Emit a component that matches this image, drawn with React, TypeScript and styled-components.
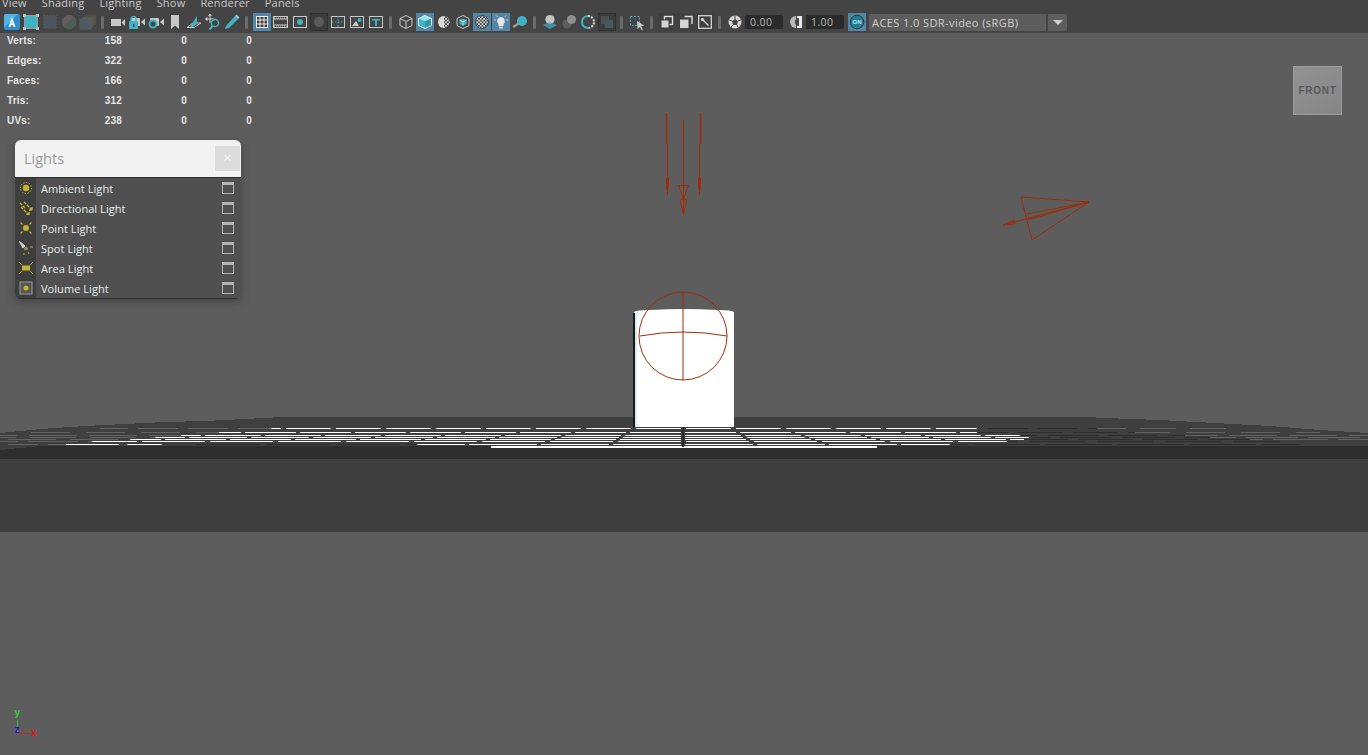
import React from 'react';
import styled, { createGlobalStyle } from 'styled-components';

const GlobalStyle = createGlobalStyle`
  html, body {
    margin: 0;
    height: 100%;
    background: #5d5d5d;
    overflow: hidden;
  }
  #root {
    height: 100%;
  }
`;

const Page = styled.div`
  display: flex;
  flex-direction: column;
  height: 755px;
  font-family: 'Open Sans', sans-serif;
`;

const MenuBar = styled.div`
  display: flex;
  gap: 15px;
  height: 11px;
  flex: none;
  padding-left: 2px;
  background: #444444;
  overflow: hidden;
`;

const MenuItem = styled.span`
  font-size: 11px;
  line-height: 11px;
  letter-spacing: 0.2px;
  color: #c9c9c9;
  margin-top: -3px;
`;

const Toolbar = styled.div`
  display: flex;
  align-items: center;
  height: 22px;
  flex: none;
  padding-left: 2px;
  background: #444444;
`;

type Tone = 'active' | 'dark' | 'shade';

const toneColors: Record<Tone, string> = {
  active: '#5285a6',
  dark: '#3c3c3c',
  shade: '#404040',
};

const Slot = styled.div<{ $tone?: Tone; $left?: number }>`
  width: 18px;
  height: 18px;
  margin: 0 0.5px 0 ${(p) => 0.5 + (p.$left ?? 0)}px;
  flex: none;
  background: ${(p) => (p.$tone ? toneColors[p.$tone] : 'transparent')};
  box-shadow: ${(p) => (p.$tone === 'dark' ? 'inset 0 0 0 1px #303030' : 'none')};
`;

const Divider = styled.div`
  width: 11px;
  flex: none;
  display: flex;
  justify-content: center;

  &::before {
    content: '';
    width: 3px;
    height: 13px;
    border-radius: 1px;
    background: #6a6a6a;
  }
`;

const NumberField = styled.div<{ $gap?: number }>`
  width: 38px;
  height: 14px;
  flex: none;
  margin-left: ${(p) => p.$gap ?? 0}px;
  border-radius: 2px;
  background: #2b2b2b;
  color: #b4b4b4;
  font-size: 10.5px;
  line-height: 14px;
  letter-spacing: 0.4px;
  padding-left: 5px;
  box-sizing: border-box;
`;

const ColorSpace = styled.div`
  width: 177px;
  height: 17px;
  flex: none;
  margin-left: 3px;
  border-radius: 2px 0 0 2px;
  background: #5d5d5d;
  color: #cfcfcf;
  font-size: 11px;
  line-height: 17px;
  letter-spacing: 0.42px;
  padding-left: 3px;
  box-sizing: border-box;
`;

const ColorSpaceArrow = styled.div`
  width: 19px;
  height: 17px;
  flex: none;
  margin-left: 2px;
  border-radius: 0 2px 2px 0;
  background: #5d5d5d;
  display: flex;
  align-items: center;
  justify-content: center;

  &::before {
    content: '';
    border-left: 5px solid transparent;
    border-right: 5px solid transparent;
    border-top: 5px solid #cfcfcf;
  }
`;

const Viewport = styled.div`
  position: relative;
  flex: 1;
  background: #5d5d5d;
`;

const Scene = styled.svg`
  position: absolute;
  inset: 0;
  width: 100%;
  height: 100%;
`;

const Stats = styled.div`
  position: absolute;
  left: 7px;
  top: -3px;
  display: grid;
  grid-template-columns: 95px 20px 65px 65px;
  grid-auto-rows: 20px;
  align-items: center;
  font-family: 'Liberation Sans', sans-serif;
  font-size: 10px;
  font-weight: 700;
  letter-spacing: 0.2px;
  color: #e6e6e6;
`;

const StatValue = styled.span`
  text-align: right;
`;

const Panel = styled.div`
  position: absolute;
  left: 15px;
  top: 107px;
  width: 226px;
  border-radius: 6px;
  overflow: hidden;
  box-shadow: 0 3px 10px rgba(0, 0, 0, 0.28);
`;

const PanelHeader = styled.div`
  height: 37px;
  display: flex;
  align-items: center;
  justify-content: space-between;
  padding-left: 9px;
  padding-right: 1px;
  background: #f2f2f2;
`;

const PanelTitle = styled.span`
  font-size: 14.5px;
  color: #9a9a9a;
`;

const CloseButton = styled.div`
  width: 25px;
  height: 25px;
  background: #dcdcdc;
  color: #f5f5f5;
  font-size: 14px;
  line-height: 24px;
  text-align: center;
`;

const PanelBody = styled.div`
  display: flex;
  flex-direction: column;
  background: #505050;
  border-top: 1px solid #2e2e2e;
  border-bottom: 1px solid #2e2e2e;
`;

const LightRow = styled.div`
  display: flex;
  align-items: center;
  height: 20px;
`;

const LightIcon = styled.div`
  width: 21px;
  height: 100%;
  flex: none;
  background: #3e3e3e;
  display: flex;
  align-items: center;
  justify-content: center;
`;

const LightName = styled.span`
  flex: 1;
  margin-left: 5px;
  font-size: 11px;
  letter-spacing: 0.05px;
  color: #e6eeee;
`;

const WindowBox = styled.div`
  width: 12px;
  height: 12px;
  margin-right: 7px;
  box-sizing: border-box;
  border: 1px solid #b4b4b4;
  border-top-width: 3px;
`;

const Cube = styled.div`
  position: absolute;
  left: 1293px;
  top: 33px;
  width: 49px;
  height: 49px;
  box-sizing: border-box;
  border: 1px solid #9c9c9c;
  background: linear-gradient(135deg, #929292, #868686);
  display: flex;
  align-items: center;
  justify-content: center;
  font-family: 'Liberation Sans', sans-serif;
  font-size: 10px;
  font-weight: 700;
  letter-spacing: 0.7px;
  color: #5a5a5a;
`;

const TEAL = '#3fb3c4';
const GREY = '#c8c8c8';

type IconProps = { children: React.ReactNode };

const Ico = ({ children }: IconProps) => (
  <svg width="18" height="18" viewBox="0 0 18 18" fill="none" style={{ display: 'block' }}>
    {children}
  </svg>
);

const cameraBody = (x = 1) => (
  <>
    <rect x={x} y={5} width={9} height={8} rx={1} fill={GREY} />
    <path d={`M${x + 10} 9 L${x + 14} 5.5 V12.5 Z`} fill={GREY} />
  </>
);

const toolIcons: Record<string, React.ReactNode> = {
  logo: (
    <>
      <rect x="1" y="1" width="16" height="16" rx="2" fill="#2b8fcb" />
      <path d="M1 15 L15 1 H3 a2 2 0 0 0 -2 2 Z" fill="#53b3e4" />
      <path d="M9 4 L5.5 14 H7.4 L8 12 H10 L10.6 14 H12.5 L9 4 Z M8.4 10.4 L9 8 L9.6 10.4 Z" fill="#ffffff" fillRule="evenodd" />
    </>
  ),
  frame: (
    <>
      <rect x="3" y="3" width="12" height="12" fill={TEAL} />
      <rect x="2.5" y="2.5" width="13" height="13" stroke="#9a9a9a" />
      <rect x="1" y="1" width="3" height="3" fill="#bdbdbd" />
      <rect x="14" y="1" width="3" height="3" fill="#bdbdbd" />
      <rect x="1" y="14" width="3" height="3" fill="#bdbdbd" />
      <rect x="14" y="14" width="3" height="3" fill="#bdbdbd" />
    </>
  ),
  dimGrid: (
    <>
      <rect x="3" y="3" width="12" height="12" fill="#4a5560" />
      <rect x="2.5" y="2.5" width="13" height="13" stroke="#565656" strokeDasharray="1.5 1.5" />
    </>
  ),
  dimBall: (
    <>
      <circle cx="9" cy="9" r="7" fill="#5e5e5e" />
      <path d="M9 2 a7 7 0 0 1 0 14 Z" fill="#6f5a5a" />
      <path d="M3 13 L14 4 a7 7 0 0 1 0 10 a7 7 0 0 1 -11 -1 Z" fill="#4f5f58" />
    </>
  ),
  dimLayers: (
    <>
      <rect x="6" y="2" width="11" height="10" fill="#5f4c46" />
      <rect x="3.5" y="4" width="11" height="10" fill="#4f5f4f" />
      <rect x="1" y="6" width="11" height="10" fill="#505a62" stroke="#5d5d5d" />
    </>
  ),
  camera: (
    <>
      <rect x="2" y="6" width="10" height="7" fill={GREY} />
      <path d="M12.5 9.5 L16 6 V13 Z" fill={GREY} />
    </>
  ),
  lockCam: (
    <>
      {cameraBody(3)}
      <rect x="1" y="8" width="9" height="8" rx="1" fill={TEAL} />
      <path d="M3 8 V6 a2.5 2.5 0 0 1 5 0 V8" stroke={TEAL} strokeWidth="1.4" />
      <rect x="5" y="11" width="1.4" height="3" fill="#444" />
    </>
  ),
  gearCam: (
    <>
      {cameraBody(3)}
      <circle cx="6" cy="11" r="3.5" fill="#444" stroke={TEAL} strokeWidth="2" />
    </>
  ),
  bookmark: <path d="M5 2 H13 V16 L9 12.5 L5 16 Z" fill={GREY} />,
  plane: (
    <>
      <path d="M2 14.5 H9 L16 10 H8 Z" stroke={GREY} fill="none" />
      <path d="M5 14 L12 3 V11 L8 14 Z" fill={TEAL} />
    </>
  ),
  moveZoom: (
    <>
      <path d="M6 1 V10 M1.5 6 H10 M6 1 L4.5 3 M6 1 L7.5 3 M1.5 6 L3.5 4.5 M1.5 6 L3.5 7.5" stroke={GREY} strokeWidth="1.1" />
      <circle cx="11" cy="10" r="3.6" fill="#444" stroke={TEAL} strokeWidth="1.5" />
      <path d="M8.5 13 L5.5 16.5" stroke={TEAL} strokeWidth="2" />
    </>
  ),
  pencil: (
    <>
      <path d="M3 13 L12 3 L15 6 L6 15 L2 16 Z" fill={TEAL} />
      <path d="M12 3 L13.5 1.6 L16.4 4.4 L15 6 Z" fill="#8fd6e0" />
    </>
  ),
  grid: (
    <>
      <rect x="3.5" y="3.5" width="11" height="11" stroke="#f0f0f0" fill="#3f3f3f" />
      <path d="M7 3.5 V14.5 M11 3.5 V14.5 M3.5 7 H14.5 M3.5 11 H14.5" stroke="#f0f0f0" />
    </>
  ),
  film: (
    <>
      <rect x="1.5" y="3.5" width="14" height="11" stroke={GREY} />
      <path d="M1.5 6 H15.5 M1.5 12 H15.5" stroke={GREY} />
      <path d="M2 5 H15 M2 13 H15" stroke={GREY} strokeDasharray="1 1" />
    </>
  ),
  dotFrame: (
    <>
      <rect x="2.5" y="3.5" width="13" height="11" stroke={GREY} />
      <circle cx="9" cy="9" r="3" fill={TEAL} />
    </>
  ),
  darkDot: <circle cx="9" cy="9" r="5" fill="#5a5a5a" />,
  safe: (
    <>
      <rect x="2.5" y="3.5" width="13" height="11" stroke={GREY} />
      <path d="M9 3 V15 M3 9 H15" stroke={TEAL} strokeDasharray="1.5 1.5" />
    </>
  ),
  picture: (
    <>
      <rect x="2.5" y="3.5" width="13" height="11" stroke={GREY} />
      <circle cx="11.5" cy="7" r="2" fill={TEAL} />
      <path d="M4 13 L8 8 L11 13 Z" fill={GREY} />
    </>
  ),
  type: (
    <>
      <rect x="2.5" y="3.5" width="13" height="11" stroke={GREY} />
      <path d="M5 6 H13 V7.5 H10 V13 H8 V7.5 H5 Z" fill={TEAL} />
    </>
  ),
  wireCube: (
    <path d="M9 2.5 L15 5.5 V12.5 L9 15.5 L3 12.5 V5.5 Z M3 5.5 L9 8.5 L15 5.5 M9 8.5 V15.5" stroke={GREY} strokeWidth="1" />
  ),
  solidCube: (
    <>
      <path d="M9 2.5 L15.5 5.5 L9 8.5 L2.5 5.5 Z" fill="#8fe3ee" />
      <path d="M2.5 5.5 L9 8.5 V15.5 L2.5 12.5 Z" fill="#3fb3c4" />
      <path d="M15.5 5.5 L9 8.5 V15.5 L15.5 12.5 Z" fill="#2c98aa" />
      <path d="M9 2.5 L15.5 5.5 V12.5 L9 15.5 L2.5 12.5 V5.5 Z" stroke="#e8e8e8" />
    </>
  ),
  halfBall: (
    <>
      <circle cx="9" cy="9" r="6" fill="url(#checker)" />
      <path d="M9 3 a6 6 0 0 0 0 12 Z" fill="#d8d8d8" />
    </>
  ),
  boxedCube: (
    <>
      <path d="M9 2.5 L15 5.5 V12.5 L9 15.5 L3 12.5 V5.5 Z" stroke={GREY} />
      <path d="M9 5.5 L12.5 7 V11 L9 12.8 L5.5 11 V7 Z" fill={TEAL} />
      <path d="M5.5 7 L9 8.8 L12.5 7 M9 8.8 V12.8" stroke="#d8f2f6" strokeWidth="0.7" />
    </>
  ),
  checkBall: (
    <>
      <circle cx="9" cy="9" r="6.5" fill="url(#checker)" />
      <circle cx="9" cy="9" r="6.5" stroke="#3a3a3a" strokeWidth="0.8" />
    </>
  ),
  bulb: (
    <>
      <path d="M9 4 a4 4 0 0 1 2.5 7 V13 H6.5 V11 A4 4 0 0 1 9 4 Z" fill="#e6e6e6" />
      <rect x="7" y="13.6" width="4" height="2" fill="#cfcfcf" />
      <path d="M2 7 H4 M14 7 H16 M4 2.5 L5.5 4 M14 2.5 L12.5 4" stroke={GREY} />
    </>
  ),
  ballShadow: (
    <>
      <circle cx="11" cy="8" r="5" fill={TEAL} />
      <path d="M1.5 13 L7 9.5 L8 11.5 L3 15 Z" fill="#9e9e9e" />
    </>
  ),
  ballPlane: (
    <>
      <circle cx="9" cy="6.5" r="4.6" fill="#c4c4c4" />
      <path d="M2 12 L9 9 L16 12 L9 16 Z" fill={TEAL} opacity="0.7" />
    </>
  ),
  twoBalls: (
    <>
      <circle cx="7" cy="11" r="4.5" fill="#5e5e5e" />
      <circle cx="11.5" cy="6.5" r="4.5" fill="#8e8e8e" />
    </>
  ),
  ring: (
    <>
      <path d="M9 3 a6 6 0 0 0 0 12" stroke={TEAL} strokeWidth="2" />
      <path d="M9 3 a6 6 0 0 1 0 12" stroke="#d8d8d8" strokeWidth="2" strokeDasharray="2 1.2" />
    </>
  ),
  dimSquares: (
    <>
      <rect x="3" y="3" width="8" height="8" fill="#505050" />
      <rect x="7" y="7" width="8" height="8" fill="#45585c" />
    </>
  ),
  selectArrow: (
    <>
      <rect x="2.5" y="3.5" width="9" height="9" stroke={TEAL} strokeDasharray="2 1.4" />
      <path d="M9 8 L16 12.5 L13 13.5 L15 16.5 L13.5 17 L12 14 L9.5 16 Z" fill={GREY} />
    </>
  ),
  overlapA: (
    <>
      <rect x="6.5" y="3.5" width="8" height="8" stroke="#e0e0e0" strokeWidth="1.4" />
      <rect x="3" y="7" width="8" height="8" fill="#d4d4d4" stroke="#3c3c3c" />
    </>
  ),
  overlapB: (
    <>
      <path d="M7.5 3.5 H15 V11" stroke="#e0e0e0" strokeWidth="1.4" />
      <rect x="3" y="6.5" width="8.5" height="8.5" fill="#d4d4d4" />
    </>
  ),
  framedPen: (
    <>
      <rect x="2.7" y="2.7" width="12.6" height="12.6" stroke="#d4d4d4" strokeWidth="1.3" />
      <path d="M5.5 5.5 L12.5 12.5" stroke="#d4d4d4" strokeWidth="1.4" />
      <circle cx="6.5" cy="6.5" r="1.6" fill="#d4d4d4" />
    </>
  ),
  aperture: (
    <>
      <circle cx="9" cy="9" r="6.5" fill="#d6d6d6" />
      <path d="M9 6 L12 8 L11 12 L7 12 L6 8 Z" fill="#444" />
      <path d="M9 2.5 V6 M15 7 L12 8 M12 14.5 L11 12 M5 14 L7 12 M3 7 L6 8" stroke="#444" />
    </>
  ),
  gamma: (
    <>
      <path d="M8 3 a6 6 0 0 0 0 12 Z" fill="#b8b8b8" />
      <rect x="9" y="3" width="5" height="12" fill="#e8e8e8" />
      <path d="M11 5 a4 4 0 0 0 0 8 Z" fill="#444" />
    </>
  ),
  onSwitch: (
    <>
      <circle cx="9" cy="9" r="6.8" fill="#1f7f8f" stroke="#2a3a40" strokeWidth="1" />
      <text x="9" y="11.2" fontSize="6" fontWeight="700" textAnchor="middle" fill="#b8e8ee" fontFamily="Liberation Sans">ON</text>
    </>
  ),
};

type ToolItem = string | { icon: string; tone: Tone };

const act = (icon: string): ToolItem => ({ icon, tone: 'active' });
const dark = (icon: string): ToolItem => ({ icon, tone: 'dark' });
const shade = (icon: string): ToolItem => ({ icon, tone: 'shade' });

const toolGroups: ToolItem[][] = [
  ['logo', 'frame', 'dimGrid', 'dimBall', 'dimLayers'],
  ['camera', 'lockCam', 'gearCam', 'bookmark', 'plane', 'moveZoom', 'pencil'],
  [act('grid'), 'film', 'dotFrame', dark('darkDot'), 'safe', 'picture', 'type'],
  ['wireCube', act('solidCube'), 'halfBall', 'boxedCube', act('checkBall'), act('bulb'), 'ballShadow'],
  ['ballPlane', 'twoBalls', 'ring', dark('dimSquares')],
  ['selectArrow'],
  [shade('overlapA'), shade('overlapB'), shade('framedPen')],
];

const ToolButton = ({ item, left }: { item: ToolItem; left?: number }) => {
  const name = typeof item === 'string' ? item : item.icon;
  const tone = typeof item === 'string' ? undefined : item.tone;
  return (
    <Slot $tone={tone} $left={left}>
      <Ico>{toolIcons[name]}</Ico>
    </Slot>
  );
};

const menus = ['View', 'Shading', 'Lighting', 'Show', 'Renderer', 'Panels'];

const stats = [
  ['Verts:', 158],
  ['Edges:', 322],
  ['Faces:', 166],
  ['Tris:', 312],
  ['UVs:', 238],
] as const;

const Y = '#c2b52e';

const lights: { name: string; icon: React.ReactNode }[] = [
  {
    name: 'Ambient Light',
    icon: (
      <>
        <circle cx="7" cy="7" r="3.2" fill={Y} />
        <circle cx="7" cy="7" r="5.5" stroke={Y} strokeDasharray="1.4 1.4" />
      </>
    ),
  },
  {
    name: 'Directional Light',
    icon: <path d="M1 2 L6 7 M5 1 L13 9 M2 6 L10 14 M13 9 V6 M13 9 H10 M10 14 V10 M10 14 H6" stroke={Y} strokeWidth="1.3" strokeDasharray="3 1" />,
  },
  {
    name: 'Point Light',
    icon: (
      <>
        <circle cx="7" cy="7" r="3" fill={Y} />
        <path d="M1.5 1.5 L3.5 3.5 M12.5 1.5 L10.5 3.5 M1.5 12.5 L3.5 10.5 M12.5 12.5 L10.5 10.5" stroke={Y} strokeWidth="1.2" />
      </>
    ),
  },
  {
    name: 'Spot Light',
    icon: (
      <>
        <path d="M0 0 L6 5 L4 7 Z" fill="#cfcfcf" stroke="#cfcfcf" />
        <circle cx="7" cy="7.5" r="2" fill="#8a8a60" />
        <path d="M11 6 H14 M9 11 L10 13 M5 12 V14" stroke={Y} strokeWidth="1" />
      </>
    ),
  },
  {
    name: 'Area Light',
    icon: (
      <>
        <rect x="3" y="4.5" width="8" height="5" fill={Y} />
        <path d="M0 1 L3 4 M14 1 L11 4 M0 13 L3 10 M14 13 L11 10" stroke={Y} />
      </>
    ),
  },
  {
    name: 'Volume Light',
    icon: (
      <>
        <rect x="1" y="1" width="12" height="12" fill="#555" stroke="#9a9a9a" />
        <circle cx="7" cy="7" r="2.6" fill={Y} />
      </>
    ),
  },
];

type FloorRow = { y: number; c: string; from: number; to: number; period: number; gap: number };

const W = '#ffffff';
const G = '#626262';
const D = '#2d2d2d';

const floorRows: FloorRow[] = [
  { y: 428, c: G, from: 100, to: 271, period: 50, gap: 10 },
  { y: 428, c: W, from: 271, to: 977, period: 50, gap: 5 },
  { y: 428, c: D, from: 977, to: 1097, period: 50, gap: 10 },
  { y: 428, c: G, from: 1097, to: 1240, period: 50, gap: 14 },
  { y: 432, c: G, from: 26, to: 219, period: 55, gap: 16 },
  { y: 432, c: W, from: 219, to: 977, period: 55, gap: 4 },
  { y: 432, c: D, from: 977, to: 1135, period: 55, gap: 10 },
  { y: 432, c: G, from: 1135, to: 1320, period: 55, gap: 16 },
  { y: 435, c: G, from: 0, to: 181, period: 60, gap: 12 },
  { y: 435, c: W, from: 181, to: 1020, period: 60, gap: 4 },
  { y: 435, c: D, from: 1020, to: 1185, period: 60, gap: 10 },
  { y: 435, c: G, from: 1185, to: 1368, period: 60, gap: 12 },
  { y: 437, c: G, from: 0, to: 155, period: 60, gap: 14 },
  { y: 437, c: W, from: 155, to: 1029, period: 62, gap: 4 },
  { y: 437, c: D, from: 1029, to: 1210, period: 62, gap: 10 },
  { y: 437, c: G, from: 1210, to: 1368, period: 62, gap: 10 },
  { y: 439, c: G, from: 0, to: 130, period: 62, gap: 14 },
  { y: 439, c: W, from: 130, to: 1024, period: 65, gap: 4 },
  { y: 439, c: D, from: 1024, to: 1250, period: 65, gap: 10 },
  { y: 439, c: G, from: 1250, to: 1368, period: 65, gap: 10 },
  { y: 441, c: G, from: 0, to: 92, period: 60, gap: 10 },
  { y: 441, c: W, from: 92, to: 1007, period: 68, gap: 5 },
  { y: 441, c: D, from: 1007, to: 1280, period: 68, gap: 12 },
  { y: 444, c: G, from: 0, to: 66, period: 40, gap: 10 },
  { y: 444, c: W, from: 66, to: 162, period: 70, gap: 8 },
  { y: 444, c: D, from: 190, to: 417, period: 70, gap: 6 },
  { y: 444, c: W, from: 417, to: 950, period: 72, gap: 4 },
  { y: 444, c: D, from: 950, to: 1300, period: 72, gap: 6 },
];

const dashOffset = (r: FloorRow) => {
  const p = r.period;
  return ((p - r.gap / 2 - (683 - r.from)) % p + p) % p;
};

const RED = '#a02c08';

export default function App() {
  return (
    <Page>
      <GlobalStyle />
      <MenuBar>
        {menus.map((m) => (
          <MenuItem key={m}>{m}</MenuItem>
        ))}
      </MenuBar>
      <Toolbar>
        <svg width="0" height="0" style={{ position: 'absolute' }}>
          <defs>
            <pattern id="checker" width="3.4" height="3.4" patternUnits="userSpaceOnUse">
              <rect width="3.4" height="3.4" fill="#e0e0e0" />
              <rect width="1.7" height="1.7" fill="#3a3a3a" />
              <rect x="1.7" y="1.7" width="1.7" height="1.7" fill="#3a3a3a" />
            </pattern>
          </defs>
        </svg>
        {toolGroups.map((group, i) => (
          <React.Fragment key={i}>
            {group.map((item, j) => (
              <ToolButton key={j} item={item} />
            ))}
            <Divider />
          </React.Fragment>
        ))}
        <ToolButton item="aperture" />
        <NumberField $gap={1}>0.00</NumberField>
        <ToolButton item="gamma" left={4} />
        <NumberField>1.00</NumberField>
        <ToolButton item={act('onSwitch')} left={3} />
        <ColorSpace>ACES 1.0 SDR-video (sRGB)</ColorSpace>
        <ColorSpaceArrow />
      </Toolbar>
      <Viewport>
        <Scene viewBox="0 33 1368 722" shapeRendering="crispEdges">
          <rect x="0" y="459" width="1368" height="73" fill="#3f3f3f" />
          <path
            d="M0 433 L41 429 L85 426 L125 424 L165 422 L205 421 L245 419 L282 417 H1086 L1105 418 L1160 420 L1215 423 L1270 426 L1320 430 L1368 433 V450 L1330 449 L1290 447 L1270 446 H41 L15 449 L0 450 Z"
            fill="#3f3f3f"
          />
          <path d="M41 446 H1368 V459 H0 V450 Z" fill={D} />
          {floorRows.map((r, i) => (
            <line
              key={i}
              x1={r.from}
              x2={r.to}
              y1={r.y + 0.5}
              y2={r.y + 0.5}
              stroke={r.c}
              strokeDasharray={`${r.period - r.gap} ${r.gap}`}
              strokeDashoffset={dashOffset(r)}
            />
          ))}
          <rect x="491" y="446" width="386" height="2" fill={W} />
          <path d="M683 427 V447" stroke={D} strokeWidth="2" />
          <path d="M634 312 Q636 310 650 310 Q684 308 718 310 Q732 310 734 312 V427 H634 Z" fill={W} shapeRendering="auto" />
          <rect x="633" y="313" width="1.5" height="114" fill="#16181a" />
          <rect x="635" y="313" width="2" height="113" fill="#dcebf2" />
          <g fill="none" stroke={RED} shapeRendering="auto">
            <circle cx="683" cy="336" r="44" strokeWidth="1" />
            <path d="M683 292 V380" strokeWidth="1" />
            <path d="M640 336 Q683 328 727 336" strokeWidth="1" />
            <path d="M666.5 113 V144 M700.5 113 V144" strokeWidth="1.6" />
            <path d="M667.5 144 V195 M699.5 144 V195" strokeWidth="1" />
            <path d="M666.5 178 V190 L668.5 188 V177 M700.5 178 V190 L698.5 188 V177" strokeWidth="1" />
            <path d="M683.5 120 V215" strokeWidth="1" />
            <path d="M678.5 185.5 H688.5 L683.5 199 Z M680 199.5 H687 L683.5 214 Z" strokeWidth="1" />
            <path d="M1021 197 L1089 202 L1032 240 Z" strokeWidth="1" />
            <path d="M1089 202 L1003 225 M1089 202 L1027 214 M1089 202 L1028 220" strokeWidth="1" />
            <path d="M1003 225 L1014 220 L1015 224 Z" strokeWidth="1" />
          </g>
          <g shapeRendering="auto" fontFamily="Liberation Sans" fontWeight="700" fontSize="10">
            <path d="M17.5 720 V733" stroke="#38c038" />
            <path d="M17 733.5 H30" stroke="#d02020" />
            <text x="14.5" y="716" fill="#38d038">y</text>
            <text x="14.5" y="733" fill="#1818d8">z</text>
            <text x="31" y="736" fill="#e01818">x</text>
          </g>
        </Scene>
        <Stats>
          {stats.map(([label, value]) => (
            <React.Fragment key={label}>
              <span>{label}</span>
              <StatValue>{value}</StatValue>
              <StatValue>0</StatValue>
              <StatValue>0</StatValue>
            </React.Fragment>
          ))}
        </Stats>
        <Panel>
          <PanelHeader>
            <PanelTitle>Lights</PanelTitle>
            <CloseButton>×</CloseButton>
          </PanelHeader>
          <PanelBody>
            {lights.map((l) => (
              <LightRow key={l.name}>
                <LightIcon>
                  <svg width="14" height="14" viewBox="0 0 14 14" fill="none">
                    {l.icon}
                  </svg>
                </LightIcon>
                <LightName>{l.name}</LightName>
                <WindowBox />
              </LightRow>
            ))}
          </PanelBody>
        </Panel>
        <Cube>FRONT</Cube>
      </Viewport>
    </Page>
  );
}
